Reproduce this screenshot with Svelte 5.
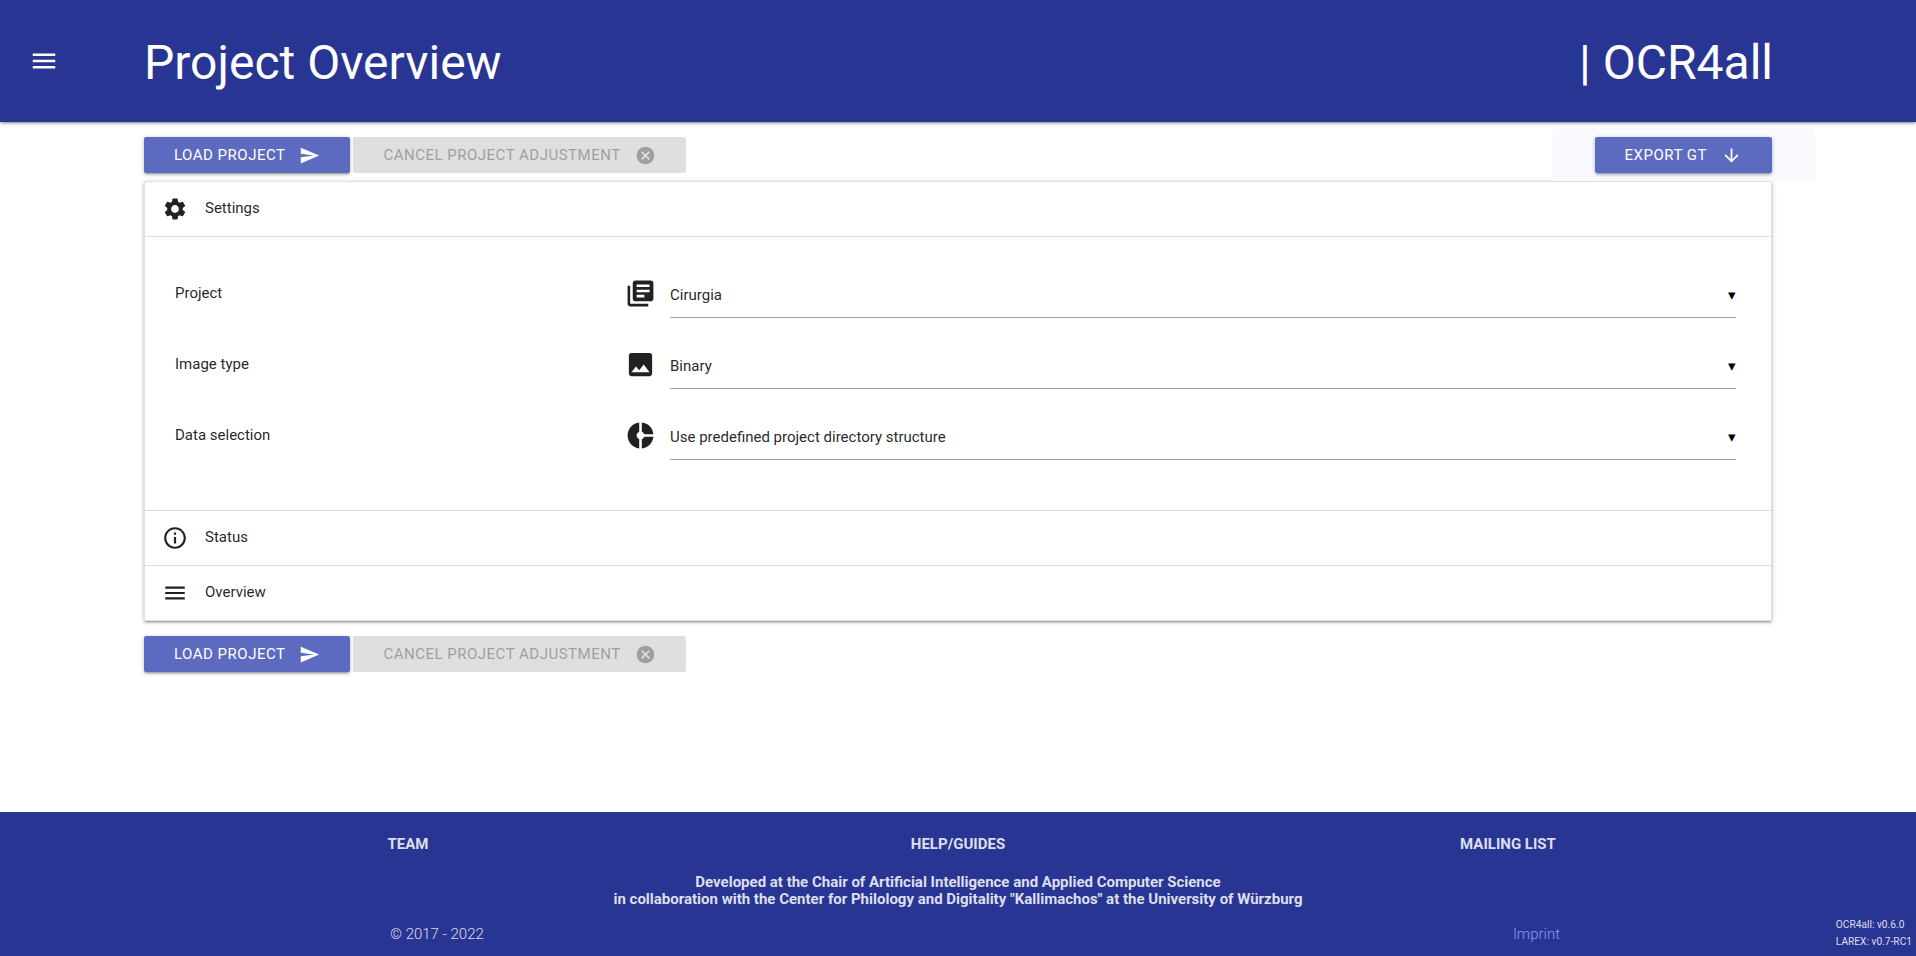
<script>
    const rows = [
        { label: "Project", value: "Cirurgia", icon: "M4 6H2v14c0 1.1.9 2 2 2h14v-2H4V6zm16-4H8c-1.1 0-2 .9-2 2v12c0 1.1.9 2 2 2h12c1.1 0 2-.9 2-2V4c0-1.1-.9-2-2-2zm-1 9H9V9h10v2zm-4 4H9v-2h6v2zm4-8H9V5h10v2z" },
        { label: "Image type", value: "Binary", icon: "M21 19V5c0-1.1-.9-2-2-2H5c-1.1 0-2 .9-2 2v14c0 1.1.9 2 2 2h14c1.1 0 2-.9 2-2zM8.5 13.5l2.5 3.01L14.5 12l4.5 6H5l3.5-4.5z" },
        { label: "Data selection", value: "Use predefined project directory structure", icon: "M11 9.16V2c-5 .5-9 4.79-9 10s4 9.5 9 10v-7.16c-1-.41-2-1.52-2-2.84s1-2.43 2-2.84zM14.86 11H22c-.48-4.75-4-8.53-9-9v7.16c1 .3 1.52.98 1.86 1.84zM13 14.84V22c5-.47 8.52-4.25 9-9h-7.14c-.34.86-.86 1.54-1.86 1.84z" },
    ];

    const menu = "M3 18h18v-2H3v2zm0-5h18v-2H3v2zm0-7v2h18V6H3z";
    const send = "M2.01 21L23 12 2.01 3 2 10l15 2-15 2z";
    const cancel = "M12 2C6.47 2 2 6.47 2 12s4.47 10 10 10 10-4.47 10-10S17.53 2 12 2zm5 13.59L15.59 17 12 13.41 8.41 17 7 15.59 10.59 12 7 8.41 8.41 7 12 10.59 15.59 7 17 8.41 13.41 12 17 15.59z";
    const down = "M20 12l-1.41-1.41L13 16.17V4h-2v12.17l-5.58-5.59L4 12l8 8 8-8z";
    const gear = "M19.14 12.94c.04-.3.06-.61.06-.94 0-.32-.02-.64-.07-.94l2.03-1.58c.18-.14.23-.41.12-.61l-1.92-3.32c-.12-.22-.37-.29-.59-.22l-2.39.96c-.5-.38-1.03-.7-1.62-.94l-.36-2.54c-.04-.24-.24-.41-.48-.41h-3.84c-.24 0-.43.17-.47.41l-.36 2.54c-.59.24-1.13.57-1.62.94l-2.39-.96c-.22-.08-.47 0-.59.22L2.74 8.87c-.12.21-.08.47.12.61l2.03 1.58c-.05.3-.09.63-.09.94s.02.64.07.94l-2.03 1.58c-.18.14-.23.41-.12.61l1.92 3.32c.12.22.37.29.59.22l2.39-.96c.5.38 1.03.7 1.62.94l.36 2.54c.05.24.24.41.48.41h3.84c.24 0 .44-.17.47-.41l.36-2.54c.59-.24 1.13-.56 1.62-.94l2.39.96c.22.08.47 0 .59-.22l1.92-3.32c.12-.22.07-.47-.12-.61l-2.01-1.58zM12 15.6c-1.98 0-3.6-1.62-3.6-3.6s1.62-3.6 3.6-3.6 3.6 1.62 3.6 3.6-1.62 3.6-3.6 3.6z";
    const info = "M11 17h2v-6h-2v6zm1-15C6.48 2 2 6.48 2 12s4.48 10 10 10 10-4.48 10-10S17.52 2 12 2zm0 18c-4.41 0-8-3.59-8-8s3.59-8 8-8 8 3.59 8 8-3.59 8-8 8zM11 9h2V7h-2v2z";
</script>

{#snippet icon(d, cls)}
    <svg class={cls} viewBox="0 0 24 24" aria-hidden="true"><path {d} /></svg>
{/snippet}

{#snippet actions()}
    <div class="btn-group">
        <button class="btn">LOAD PROJECT {@render icon(send, "btn-icon")}</button>
        <button class="btn disabled">CANCEL PROJECT ADJUSTMENT {@render icon(cancel, "btn-icon")}</button>
    </div>
{/snippet}

<div class="page">
    <header>
        <div class="menu">{@render icon(menu, "menu-icon")}</div>
        <h1>Project Overview</h1>
        <span class="brand">| OCR4all</span>
    </header>

    <main>
        <div class="top-row">
            {@render actions()}
            <div class="export">
                <button class="btn">EXPORT GT {@render icon(down, "btn-icon")}</button>
            </div>
        </div>

        <section class="card">
            <div class="head">{@render icon(gear, "head-icon")}<span>Settings</span></div>
            <div class="body">
                {#each rows as row}
                    <div class="row">
                        <div class="label">{row.label}</div>
                        {@render icon(row.icon, "field-icon")}
                        <div class="select">
                            <span>{row.value}</span>
                            <span class="arrow">▾</span>
                        </div>
                    </div>
                {/each}
            </div>
            <div class="head">{@render icon(info, "head-icon")}<span>Status</span></div>
            <div class="head">{@render icon(menu, "head-icon")}<span>Overview</span></div>
        </section>

        <div class="bottom-row">{@render actions()}</div>
    </main>

    <footer>
        <div class="links">
            <span>TEAM</span>
            <span>HELP/GUIDES</span>
            <span>MAILING LIST</span>
        </div>
        <p class="credit">
            Developed at the Chair of Artificial Intelligence and Applied Computer Science<br />
            in collaboration with the Center for Philology and Digitality "Kallimachos" at the University of Würzburg
        </p>
        <div class="legal">
            <span>© 2017 - 2022</span>
            <span class="imprint">Imprint</span>
        </div>
        <div class="versions">OCR4all: v0.6.0<br />LAREX: v0.7-RC1</div>
    </footer>
</div>

<style>
    :global(body) {
        margin: 0;
        background: #fff;
    }

    .page {
        height: 956px;
        display: flex;
        flex-direction: column;
        font-family: Roboto, "Liberation Sans", sans-serif;
        color: rgba(0, 0, 0, .87);
        overflow: hidden;
    }

    svg {
        fill: currentColor;
        flex: none;
        display: block;
    }

    header {
        height: 122px;
        flex: none;
        background: #283593;
        color: #fff;
        display: flex;
        align-items: center;
        padding-right: 143px;
        box-shadow: 0 2px 2px 0 rgba(0,0,0,.14), 0 3px 1px -2px rgba(0,0,0,.12), 0 1px 5px 0 rgba(0,0,0,.2);
        position: relative;
        z-index: 2;
    }

    .menu {
        width: 144px;
        flex: none;
        padding-left: 29px;
        box-sizing: border-box;
    }

    .menu-icon {
        width: 30px;
        height: 30px;
    }

    h1 {
        margin: 0;
        padding-top: 3px;
        font-size: 48px;
        font-weight: 400;
        flex: 1;
    }

    .brand {
        font-size: 48px;
        padding-top: 3px;
    }

    main {
        flex: 1;
        padding: 0 144px;
    }

    .top-row {
        display: flex;
        justify-content: space-between;
        height: 59px;
    }

    .btn-group {
        display: flex;
        gap: 3px;
        padding-top: 15px;
    }

    .btn {
        height: 36px;
        border: 0;
        border-radius: 2px;
        padding: 0 30px;
        background: #5c6bc0;
        color: #fff;
        font: 400 15px Roboto, sans-serif;
        letter-spacing: .5px;
        display: flex;
        align-items: center;
        gap: 14px;
        box-shadow: 0 2px 2px 0 rgba(0,0,0,.14), 0 3px 1px -2px rgba(0,0,0,.12), 0 1px 5px 0 rgba(0,0,0,.2);
    }

    .btn.disabled {
        background: #dfdfdf;
        color: #9f9f9f;
        box-shadow: none;
    }

    .btn-icon {
        width: 21px;
        height: 21px;
    }

    .export {
        background: #f9faff;
        border-radius: 4px;
        padding: 9px 43px 0;
        margin: 6px -43px 0 0;
    }

    .card {
        border: 1px solid #e0e0e0;
        box-shadow: 0 2px 2px 0 rgba(0,0,0,.14), 0 3px 1px -2px rgba(0,0,0,.12), 0 1px 5px 0 rgba(0,0,0,.2);
        background: #fff;
    }

    .head {
        height: 54px;
        display: flex;
        align-items: center;
        padding-left: 17px;
        gap: 17px;
        font-size: 15px;
    }

    .head span {
        transform: translateY(-1px);
    }

    .head + .head,
    .body + .head {
        border-top: 1px solid #ddd;
    }

    .head-icon {
        width: 26px;
        height: 26px;
    }

    .body {
        border-top: 1px solid #ddd;
        height: 274px;
        padding: 23px 35px 0 30px;
        box-sizing: border-box;
    }

    .row {
        display: flex;
        align-items: center;
        height: 71px;
        font-size: 15px;
    }

    .label {
        width: 450px;
        flex: none;
        transform: translateY(-3px);
    }

    .field-icon {
        width: 31px;
        height: 31px;
        margin-right: 14px;
        transform: translateY(-2px);
    }

    .select {
        flex: 1;
        height: 44px;
        display: flex;
        justify-content: space-between;
        align-items: center;
        border-bottom: 1px solid #9e9e9e;
    }

    .arrow {
        font-size: 15px;
        color: #000;
    }

    footer {
        height: 144px;
        flex: none;
        background: #283593;
        color: rgba(255, 255, 255, .85);
        position: relative;
        box-sizing: border-box;
        padding-top: 23px;
        font-size: 15px;
    }

    .links {
        display: grid;
        grid-template-columns: repeat(3, 550px);
        justify-content: center;
        text-align: center;
        font-weight: 700;
    }

    .credit {
        margin: 21px 0 0;
        text-align: center;
        font-weight: 700;
        line-height: 17px;
    }

    .legal {
        display: flex;
        justify-content: space-between;
        padding: 17px 356px 0 390px;
        font-weight: 300;
    }

    .imprint {
        color: #8a9cf5;
    }

    .versions {
        position: absolute;
        right: 4px;
        bottom: 6px;
        font-size: 10.2px;
        line-height: 17px;
    }
</style>
